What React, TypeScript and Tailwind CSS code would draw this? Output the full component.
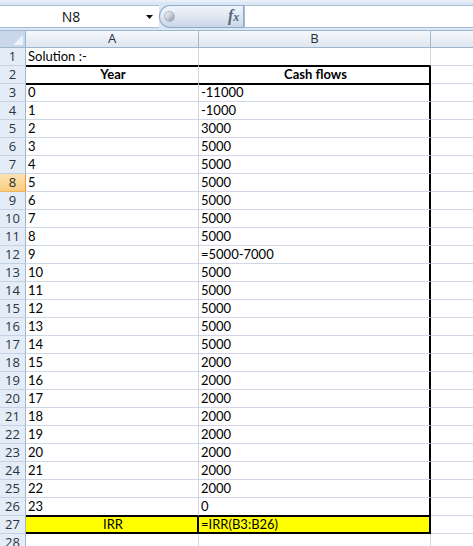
import React from "react";

const cash = [
  "-11000", "-1000", "3000", "5000", "5000", "5000", "5000", "5000", "5000",
  "=5000-7000", "5000", "5000", "5000", "5000", "5000", "2000", "2000", "2000",
  "2000", "2000", "2000", "2000", "2000", "0",
];

type RowDef = { n: number; a: string; b: string; kind: string };

const rows: RowDef[] = [
  { n: 1, a: "Solution :-", b: "", kind: "r1" },
  { n: 2, a: "Year", b: "Cash flows", kind: "r2" },
  ...cash.map((c, i) => ({
    n: i + 3,
    a: String(i),
    b: c,
    kind: i === 0 ? "r3" : i === 23 ? "r26" : "mid",
  })),
  { n: 27, a: "IRR", b: "=IRR(B3:B26)", kind: "r27" },
  { n: 28, a: "", b: "", kind: "r28" },
];

const aCls: Record<string, string> = {
  r1: "border-b-black",
  r2: "border-b-black shadow-[inset_0_1px_0_#000] font-bold justify-center",
  r3: "shadow-[inset_0_1px_0_#000]",
  mid: "",
  r26: "border-b-black",
  r27: "border-b-black border-r-black bg-[#ffff00] justify-center shadow-[inset_0_1px_0_#000,inset_0_-1px_0_#000,inset_-1px_0_0_#000]",
  r28: "",
};

const bCls: Record<string, string> = {
  r1: "border-b-black",
  r2: "border-b-black border-r-black font-bold justify-center shadow-[inset_0_1px_0_#000,inset_-1px_0_0_#000]",
  r3: "border-r-black shadow-[inset_0_1px_0_#000,inset_-1px_0_0_#000]",
  mid: "border-r-black shadow-[inset_-1px_0_0_#000]",
  r26: "border-b-black border-r-black shadow-[inset_-1px_0_0_#000]",
  r27: "border-b-black border-r-black bg-[#ffff00] shadow-[inset_0_1px_0_#000,inset_0_-1px_0_#000,inset_-1px_0_0_#000]",
  r28: "",
};

function NameBox() {
  return (
    <div className="relative w-[159px] shrink-0 h-[23px] bg-white border-y border-[#a7bcd6] flex items-center">
      <span className="w-[142px] text-center text-[14px] text-[#111] font-['Open_Sans',sans-serif]">N8</span>
      <svg className="absolute left-[146px] top-[9px]" width="7" height="4" viewBox="0 0 7 4">
        <path d="M0 0 H7 L3.5 4 Z" fill="#111" />
      </svg>
    </div>
  );
}

function FxPill() {
  return (
    <div className="relative w-[85px] shrink-0 h-[23px] rounded-l-[11px] border border-r-0 border-[#8fa9c9] bg-gradient-to-b from-[#f1f5fb] via-[#dfe7f2] to-[#c9d6e7]">
      <div className="absolute left-[4px] top-[5px] w-[11px] h-[11px] rounded-full bg-gradient-to-br from-[#fafbfc] via-[#c6ccd4] to-[#8c96a3] border border-[#a9b2be]" />
      <span className="absolute left-[68px] top-[2px] text-[16px] italic font-bold text-[#56657a] font-['Liberation_Serif',serif] leading-none whitespace-nowrap">
        f<span className="text-[12px]">x</span>
      </span>
      <div className="absolute right-0 top-0 h-full w-px bg-[#8fa9c9]" />
    </div>
  );
}

export default function App() {
  return (
    <div className="w-[473px] h-[546px] overflow-hidden bg-white font-['Lato',sans-serif]">
      {/* formula bar */}
      <div className="h-[30px] bg-[#dce7f5] flex items-start pt-[3px] border-t-[2px] border-t-[#e8eff8]">
        <NameBox />
        <FxPill />
        <div className="flex-1 h-[23px] bg-white border border-r-0 border-[#a7bcd6]" />
      </div>

      {/* sheet */}
      <div className="grid grid-cols-[26px_173px_232px_1fr]">
        {/* header row */}
        <div className="h-[18px] border-y border-r border-[#9eb6ce] bg-[#c8d7ec] relative">
          <svg className="absolute right-[2px] bottom-[2px]" width="10" height="10" viewBox="0 0 10 10">
            <path d="M10 0 V10 H0 Z" fill="#eef3fa" />
          </svg>
        </div>
        <div className="h-[18px] border-y border-r border-[#9eb6ce] bg-gradient-to-b from-[#f7f9fc] to-[#dee6f0] flex items-center justify-center text-[13px] text-[#27313d] font-['Open_Sans',sans-serif]">
          A
        </div>
        <div className="h-[18px] border-y border-r border-[#9eb6ce] bg-gradient-to-b from-[#f7f9fc] to-[#dee6f0] flex items-center justify-center text-[13px] text-[#27313d] font-['Open_Sans',sans-serif]">
          B
        </div>
        <div className="h-[18px] border-y border-[#9eb6ce] bg-gradient-to-b from-[#f7f9fc] to-[#dee6f0]" />

        {rows.map((r) => (
          <React.Fragment key={r.n}>
            <div
              className={
                r.n === 8
                  ? "h-[18px] border-b border-r border-b-[#f0b45c] border-r-[#f29536] bg-gradient-to-b from-[#fce2b1] to-[#f8cd82] flex items-center justify-center text-[13px] text-[#2a2a2a] font-['Open_Sans',sans-serif]"
                  : "h-[18px] border-b border-r border-b-[#c5d2e4] border-r-[#9eb6ce] bg-[#e4ecf7] flex items-center justify-center text-[13px] text-[#2a3440] font-['Open_Sans',sans-serif]"
              }
            >
              {r.n}
            </div>
            <div
              className={`h-[18px] border-b border-r border-[#d0d7e5] flex items-center pl-[2px] text-[13px] text-black whitespace-nowrap overflow-hidden ${aCls[r.kind]}`}
            >
              {r.a}
            </div>
            <div
              className={`h-[18px] border-b border-r border-[#d0d7e5] flex items-center pl-[2px] text-[13px] text-black whitespace-nowrap overflow-hidden ${bCls[r.kind]}`}
            >
              {r.b}
            </div>
            <div className="h-[18px] border-b border-[#d0d7e5]" />
          </React.Fragment>
        ))}
      </div>
    </div>
  );
}
